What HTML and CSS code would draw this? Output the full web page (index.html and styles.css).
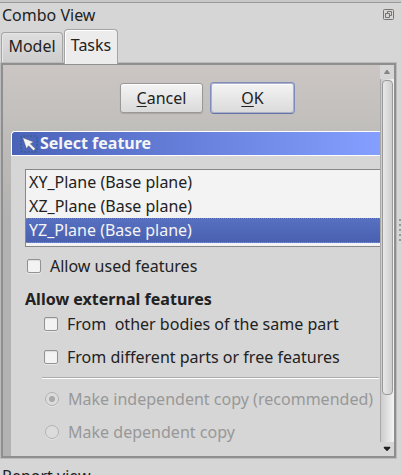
FILE: index.html
```html
<!DOCTYPE html>
<html lang="en">
<head>
<meta charset="utf-8">
<title>Combo View</title>
<link rel="stylesheet" href="styles.css">
</head>
<body>
<div class="window">
  <header class="dock-title">
    <span>Combo View</span>
    <svg class="float-icon" width="11" height="11" viewBox="0 0 11 11" fill="none" stroke="#77736e">
      <rect x=".5" y=".5" width="10" height="10" rx="1"/>
      <path d="M4.5 4V2.5h4v4H7M2.5 4.5h4v4h-4z"/>
    </svg>
  </header>
  <nav class="tabs">
    <div class="tab">Model</div>
    <div class="tab active">Tasks</div>
  </nav>
  <div class="middle">
    <main class="panel">
      <div class="content">
        <div class="actions">
          <button class="btn"><u>C</u>ancel</button>
          <button class="btn default"><u>O</u>K</button>
        </div>
        <section class="task">
          <h2 class="task-head">
            <svg width="18" height="18" viewBox="0 0 18 18">
              <rect x="1" y="1" width="16" height="16" rx="2" fill="none" stroke="#36608f" stroke-width="1.6" stroke-dasharray="2 1.5"/>
              <path d="M2.5 2.5 14 7l-3.5 1.8 5 5-2 2-5-5-2 3.2z" fill="#f5f4ee" stroke="#465784" stroke-width=".6"/>
            </svg>
            <span>Select feature</span>
          </h2>
          <div class="task-body">
            <ul class="list">
              <li>XY_Plane (Base plane)</li>
              <li>XZ_Plane (Base plane)</li>
              <li class="selected">YZ_Plane (Base plane)</li>
            </ul>
            <label class="option used"><i class="check"></i>Allow used features</label>
            <h3>Allow external features</h3>
            <div class="external">
              <label class="option"><i class="check"></i>From&nbsp; other bodies of the same part</label>
              <label class="option"><i class="check"></i>From different parts or free features</label>
              <div class="rule"></div>
              <label class="option disabled"><i class="radio on"></i>Make independent copy (recommended)</label>
              <label class="option disabled"><i class="radio"></i>Make dependent copy</label>
            </div>
          </div>
        </section>
      </div>
      <div class="scrollbar">
        <div class="arrow"><svg width="8" height="6" viewBox="0 0 8 6"><path d="M1.5 4.5 4 1l2.5 3.5z" fill="#858585" stroke="#858585"/></svg></div>
        <div class="track"><div class="thumb"></div></div>
        <div class="arrow down"><svg width="8" height="6" viewBox="0 0 8 6"><path d="M1 1h6v1L4 5 1 2z" fill="#202020" stroke="#202020" stroke-width=".5"/></svg></div>
      </div>
    </main>
    <div class="grip"><i></i><i></i><i></i><i></i><i></i></div>
  </div>
  <footer class="report">Report view</footer>
</div>
</body>
</html>
```
FILE: styles.css
```css
* { box-sizing: border-box; }
body {
  margin: 0;
  overflow: hidden;
  font: 16px/24px "Noto Sans", sans-serif;
  color: #222;
  background: #d6d6d6;
}
.window {
  display: flex;
  flex-direction: column;
  height: 475px;
  overflow: hidden;
  border-top: 2px solid #c8c8c8;
}
.dock-title {
  display: flex;
  flex: none;
  align-items: center;
  justify-content: space-between;
  height: 27px;
  padding: 0 7px 2px 2px;
  border-top: 1px solid #999;
}
.float-icon { margin-bottom: 1px; }
.tabs {
  display: flex;
  flex: none;
  align-items: flex-end;
  gap: 1px;
  height: 34px;
  padding-left: 1px;
}
.tab {
  width: 62px;
  height: 31px;
  padding-top: 1px;
  text-align: center;
  border: 1px solid #a4a4a4;
  border-bottom: 0;
  border-radius: 4px 4px 0 0;
  background: linear-gradient(#dedede, #cdcdcd);
  box-shadow: inset 1px 1px #e6e6e6;
}
.tab.active {
  width: 54px;
  height: 35px;
  margin-bottom: -1px;
  padding-top: 3px;
  background: #ececec;
  box-shadow: inset 1px 1px #fff;
  position: relative;
  z-index: 1;
}
.middle { display: flex; height: 395px; flex: none; }
.panel {
  display: flex;
  width: 395px;
  margin-left: 1px;
  border: 2px solid #8f8f8f;
  box-shadow: 0 0 0 1px #bbb;
}
.content {
  width: 377px;
  padding: 17px 0 0 8px;
  overflow: hidden;
  background: linear-gradient(#cbc6c3, #bfbdba 70px, #b2b2b2 155px);
}
.actions {
  display: flex;
  align-items: center;
  gap: 7px;
  height: 32px;
  padding-left: 109px;
}
.btn {
  width: 83px;
  height: 30px;
  padding: 0 0 1px;
  font: inherit;
  color: inherit;
  border: 1px solid #9b9998;
  border-radius: 3px;
  background: linear-gradient(#f4f4f4, #dadada);
  box-shadow: inset 0 1px #fff, 0 1px 1px #a9a6a4;
}
.btn.default {
  width: 85px;
  height: 32px;
  border: 1px solid #7f8cbc;
  border-bottom-color: #6574a8;
  border-radius: 4px;
  box-shadow: inset 0 0 0 1px #a9b0c8, inset 0 2px #fff;
}
.btn u { text-underline-offset: 2px; text-decoration-skip-ink: none; }
.task { margin-top: 17px; }
.task-head {
  display: flex;
  align-items: center;
  gap: 2px;
  height: 25px;
  margin: 0;
  padding-left: 8px;
  font-size: 16px;
  line-height: 22px;
  color: #f5f5f5;
  border: 1px solid #fff;
  border-right: 0;
  border-radius: 4px 0 0 0;
  background: linear-gradient(90deg, #4a62b8, #849fff);
}
.task-head span { margin-bottom: 2px; }
.task-body {
  height: 310px;
  padding: 13px 0 0 14px;
  background: #d6d6d6;
}
.list {
  height: 78px;
  margin: 0;
  padding: 0;
  list-style: none;
  border: 1px solid #888;
  border-right: 0;
  background: #f3f3f3;
}
.list li { height: 24px; padding-left: 3px; white-space: nowrap; }
.list .selected {
  height: 25px;
  color: #f4f4f4;
  border: 1px dotted #8b8b7c;
  border-width: 1px 0;
  line-height: 22px;
  background: linear-gradient(#5870c0, #4860af);
}
.option {
  display: flex;
  align-items: center;
  height: 33px;
  white-space: nowrap;
}
.used { height: 24px; margin-top: 7px; padding-left: 2px; }
h3 {
  margin: 9px 0 0;
  font-size: 16.06px;
  line-height: 24px;
  white-space: nowrap;
}
.external { margin-top: -4px; padding-left: 17px; }
.external .option { padding-left: 2px; font-size: 16.04px; }
.check {
  width: 14px;
  height: 14px;
  margin-right: 9px;
  border: 1px solid #929292;
  border-radius: 2px;
  background: #f3f3f3;
  box-shadow: inset 0 1px 1px #ddd, 0 1px #e8e8e8;
}
.rule {
  height: 2px;
  margin: 4px 1px 3px 0;
  border-top: 1px solid #acacac;
  border-bottom: 1px solid #fff;
}
.external .disabled { padding-left: 3px; color: #989898; }
.radio {
  width: 14px;
  height: 14px;
  margin-right: 9px;
  border: 1px solid #b2b2b2;
  border-radius: 50%;
  background: #dcdcdc;
  box-shadow: 0 1px #e2e2e2;
}
.radio.on { background: radial-gradient(circle, #aaa 2.7px, #dcdcdc 3.5px); }
.scrollbar {
  display: flex;
  flex-direction: column;
  width: 14px;
  background: #d6d6d6;
}
.arrow {
  display: flex;
  align-items: center;
  justify-content: center;
  height: 14px;
}
.track {
  flex: 1;
  padding: 1px 1px 0;
  border-left: 1px solid #aaa;
  background: linear-gradient(90deg, #ccc, #f4f4f4);
}
.thumb {
  width: 11px;
  height: 315px;
  border: 1px solid #999;
  border-radius: 4px;
  background: linear-gradient(90deg, #e8e8e8, #cecece);
}
.grip {
  display: flex;
  flex-direction: column;
  gap: 3px;
  width: 2px;
  margin: 156px 0 0 3px;
}
.grip i { height: 2px; flex: none; background: #999; }
.report { flex: none; padding: 6px 0 0 2px; white-space: nowrap; }
```
